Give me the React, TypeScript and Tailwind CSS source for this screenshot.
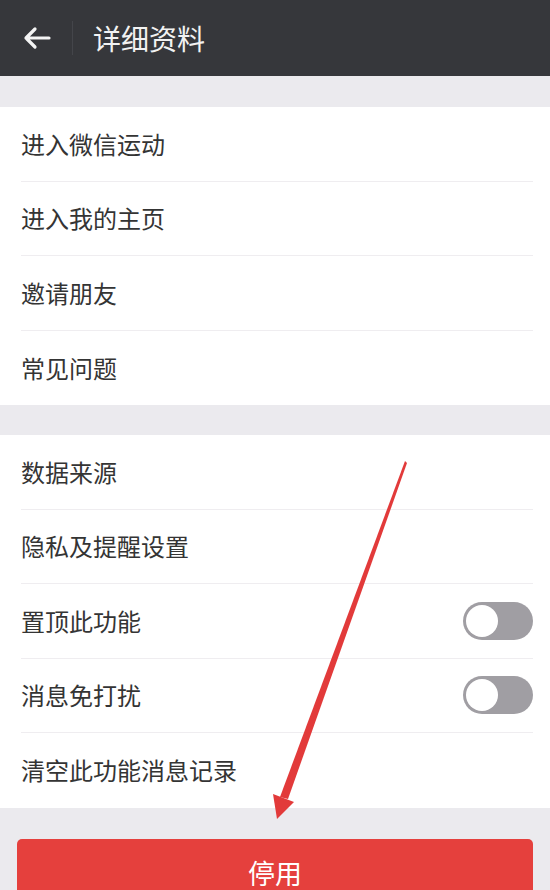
import React from 'react';

const groupOne = ['进入微信运动', '进入我的主页', '邀请朋友', '常见问题'];

const groupTwo: { label: string; toggle?: boolean }[] = [
  { label: '数据来源' },
  { label: '隐私及提醒设置' },
  { label: '置顶此功能', toggle: true },
  { label: '消息免打扰', toggle: true },
  { label: '清空此功能消息记录' },
];

function Toggle() {
  return (
    <div className="relative h-[38px] w-[70px] rounded-full bg-[#a09ea3]">
      <div className="absolute left-[3px] top-[3px] h-[32px] w-[32px] rounded-full bg-white" />
    </div>
  );
}

function Row({ label, last, toggle }: { label: string; last?: boolean; toggle?: boolean }) {
  return (
    <div className="bg-white pl-[21px] pr-[17px]">
      <div
        className={`flex h-[74.5px] items-center justify-between ${
          last ? '' : 'border-b border-[#efedf0]'
        }`}
      >
        <span className="text-[24px] text-[#343434]">{label}</span>
        {toggle && <Toggle />}
      </div>
    </div>
  );
}

export default function App() {
  return (
    <div
      className="relative h-[890px] w-[550px] overflow-hidden bg-[#ebeaee]"
      style={{ fontFamily: '"Noto Sans CJK SC", "Noto Sans", sans-serif' }}
    >
      {/* 顶部标题栏 */}
      <header className="flex h-[76px] items-center bg-[#36373b]">
        <button className="flex h-full w-[72px] items-center pl-[23px]" aria-label="返回">
          <svg width="28" height="24" viewBox="0 0 28 24" fill="none">
            <path
              d="M26 12H3M12 3L3 12l9 9"
              stroke="#f4f4f4"
              strokeWidth="3.2"
              strokeLinecap="round"
              strokeLinejoin="round"
            />
          </svg>
        </button>
        <div className="h-[34px] w-px bg-[#44454a]" />
        <h1 className="ml-[20px] text-[28px] text-[#f2f2f2]">详细资料</h1>
      </header>

      <div className="h-[31px]" />

      <section>
        {groupOne.map((label, i) => (
          <Row key={label} label={label} last={i === groupOne.length - 1} />
        ))}
      </section>

      <div className="h-[30px]" />

      <section>
        {groupTwo.map((item, i) => (
          <Row
            key={item.label}
            label={item.label}
            toggle={item.toggle}
            last={i === groupTwo.length - 1}
          />
        ))}
      </section>

      <div className="px-[17px] pt-[31px]">
        <button className="flex h-[90px] w-full justify-center rounded-[5px] bg-[#e5403d] pt-[14px] text-[27px] text-white">
          停用
        </button>
      </div>

      {/* 标注箭头 */}
      <svg
        className="pointer-events-none absolute left-0 top-0"
        width="550"
        height="890"
        viewBox="0 0 550 890"
      >
        <polygon points="405,461 407,463 288,799 280,797" fill="#e23a3a" />
        <polygon points="273,794 294,802 277,819" fill="#e23a3a" />
      </svg>
    </div>
  );
}
